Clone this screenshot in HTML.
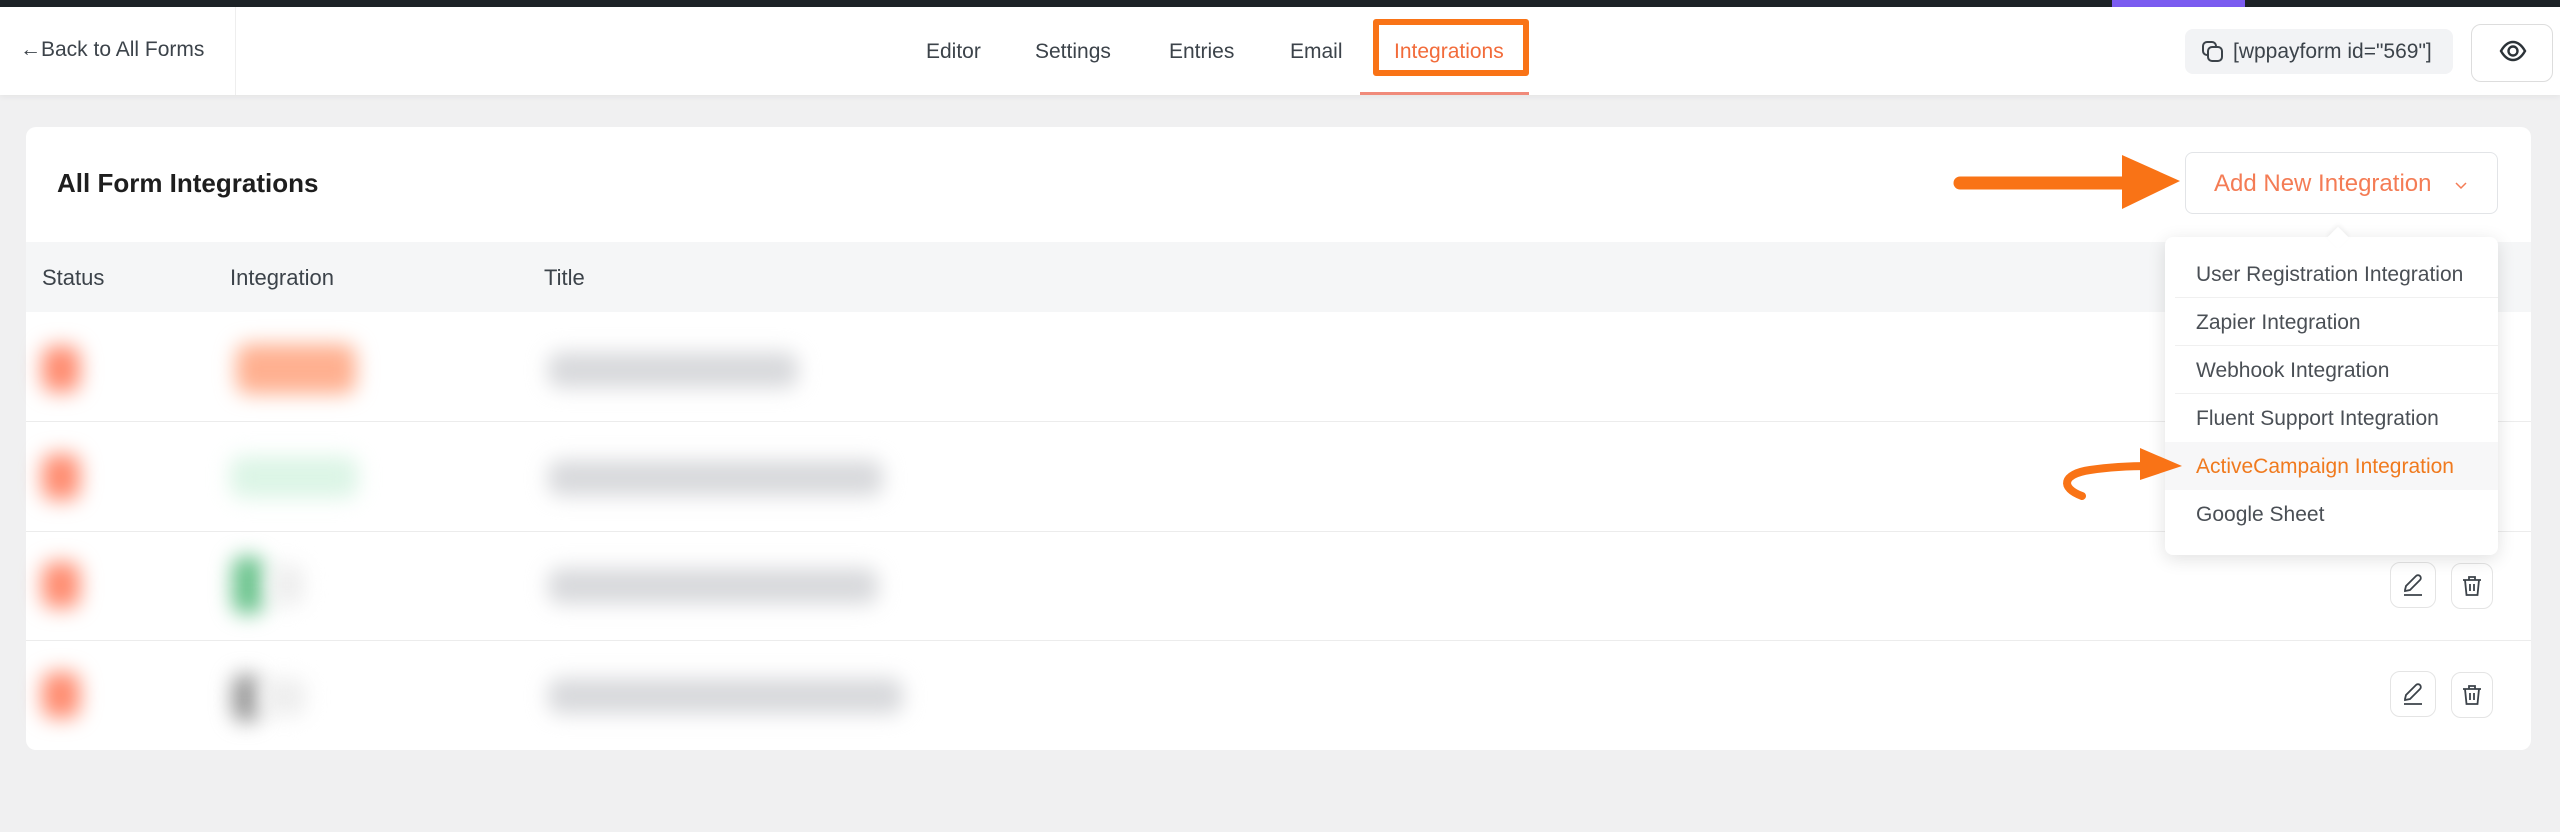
<!DOCTYPE html>
<html><head><meta charset="utf-8"><style>
*{box-sizing:border-box;margin:0;padding:0}
body{width:2560px;height:832px;overflow:hidden;background:#f0f0f1;font-family:"Liberation Sans",sans-serif;position:relative;color:#1e1e1e}
.abs{position:absolute}
.topbar{left:0;top:0;width:2560px;height:7px;background:#1d2327}
.purple{left:2112px;top:0;width:133px;height:7px;background:#7b5cf0}
.header{left:0;top:7px;width:2560px;height:88px;background:#fff;box-shadow:0 2px 6px rgba(0,0,0,.05)}
.nav{font-size:21px;color:#3c434a;top:40px}
.card{left:26px;top:127px;width:2505px;height:623px;background:#fff;border-radius:10px}
.th{font-size:22px;color:#3c434a;top:265px}
.sep{left:26px;width:2505px;height:1px;background:#ececec}
.blur{filter:blur(10px);border-radius:12px}
.dd{left:2165px;top:237px;width:333px;height:318px;background:#fff;border-radius:8px;box-shadow:0 4px 18px rgba(0,0,0,.12)}
.it{position:absolute;left:31px;font-size:21px;color:#4a4f55}
.itsep{position:absolute;left:10px;right:0;height:1px;background:#f0f0f0}
.btn{width:46px;height:46px;border:1px solid #e4e4e4;border-radius:10px;background:#fff;display:flex;align-items:center;justify-content:center}
</style></head><body>
<div class="abs topbar"></div><div class="abs purple"></div>
<div class="abs header"></div>
<div class="abs" style="left:20px;top:38px;font-size:21px;color:#3c434a">←Back to All Forms</div>
<div class="abs" style="left:235px;top:7px;width:1px;height:88px;background:#eee"></div>
<div class="abs nav" style="left:926px">Editor</div>
<div class="abs nav" style="left:1035px">Settings</div>
<div class="abs nav" style="left:1169px">Entries</div>
<div class="abs nav" style="left:1290px">Email</div>
<div class="abs nav" style="left:1394px;color:#f26b3a">Integrations</div>
<div class="abs" style="left:1373px;top:19px;width:156px;height:57px;border:6px solid #f97316;border-radius:3px"></div>
<div class="abs" style="left:1360px;top:92px;width:169px;height:3px;background:#f08a7a"></div>
<div class="abs" style="left:2185px;top:29px;width:268px;height:45px;background:#f2f3f5;border-radius:8px"></div>
<svg class="abs" style="left:2200px;top:39px" width="26" height="26" viewBox="0 0 26 26" fill="none" stroke="#3c434a" stroke-width="2"><rect x="8" y="8" width="14" height="14" rx="4"/><path d="M16 8V7a4 4 0 0 0-4-4H7a4 4 0 0 0-4 4v5a4 4 0 0 0 4 4h1"/></svg>
<div class="abs" style="left:2233px;top:40px;font-size:21px;color:#3c434a">[wppayform id="569"]</div>
<div class="abs" style="left:2471px;top:24px;width:82px;height:58px;border:1px solid #ddd;border-radius:10px;background:#fff"></div>
<svg class="abs" style="left:2499px;top:40px" width="28" height="22" viewBox="0 0 28 22" fill="none" stroke="#2c3338" stroke-width="2.4"><path d="M2 11C6 4 10 2 14 2s8 2 12 9c-4 7-8 9-12 9S6 18 2 11z"/><circle cx="14" cy="11" r="4.5"/></svg>

<div class="abs card"></div>
<div class="abs" style="left:57px;top:168px;font-size:26px;font-weight:bold;color:#1e1e1e">All Form Integrations</div>
<div class="abs" style="left:26px;top:242px;width:2505px;height:70px;background:#f5f6f7"></div>
<div class="abs th" style="left:42px">Status</div>
<div class="abs th" style="left:230px">Integration</div>
<div class="abs th" style="left:544px">Title</div>
<div class="abs sep" style="top:421px"></div>
<div class="abs sep" style="top:531px"></div>
<div class="abs sep" style="top:640px"></div>

<div class="abs blur" style="left:42px;top:346px;width:38px;height:46px;background:#ff8c70"></div>
<div class="abs blur" style="left:42px;top:454px;width:38px;height:46px;background:#ff8c70"></div>
<div class="abs blur" style="left:42px;top:562px;width:38px;height:46px;background:#ff8c70"></div>
<div class="abs blur" style="left:42px;top:672px;width:38px;height:46px;background:#ff8c70"></div>
<div class="abs blur" style="left:236px;top:344px;width:120px;height:50px;background:#ffb090"></div>
<div class="abs blur" style="left:230px;top:456px;width:128px;height:42px;background:#dcf5e6"></div>
<div class="abs blur" style="left:232px;top:556px;width:32px;height:58px;background:#6cc48e"></div>
<div class="abs blur" style="left:270px;top:564px;width:34px;height:42px;background:#eee"></div>
<div class="abs blur" style="left:232px;top:674px;width:28px;height:48px;background:#9a9a9a"></div>
<div class="abs blur" style="left:262px;top:678px;width:44px;height:38px;background:#eee"></div>
<div class="abs blur" style="left:548px;top:352px;width:250px;height:36px;background:#d8d9dc"></div>
<div class="abs blur" style="left:548px;top:460px;width:335px;height:36px;background:#d8d9dc"></div>
<div class="abs blur" style="left:548px;top:568px;width:330px;height:36px;background:#d8d9dc"></div>
<div class="abs blur" style="left:548px;top:678px;width:355px;height:36px;background:#d8d9dc"></div>

<div class="abs btn" style="left:2390px;top:562px"><svg width="26" height="26" viewBox="0 0 26 26" fill="none" stroke="#3c434a" stroke-width="1.8"><path d="M5 18l1-4L16 4a2.5 2.5 0 0 1 4 4L10 18l-5 1z"/><path d="M4 23h18"/></svg></div>
<div class="abs btn" style="left:2451px;top:563px;width:42px"><svg width="22" height="24" viewBox="0 0 22 24" fill="none" stroke="#3c434a" stroke-width="1.8"><path d="M2 6h18M8 6V3h6v3M4 6l1.5 15h11L18 6M9 10v7M13 10v7"/></svg></div>
<div class="abs btn" style="left:2390px;top:671px"><svg width="26" height="26" viewBox="0 0 26 26" fill="none" stroke="#3c434a" stroke-width="1.8"><path d="M5 18l1-4L16 4a2.5 2.5 0 0 1 4 4L10 18l-5 1z"/><path d="M4 23h18"/></svg></div>
<div class="abs btn" style="left:2451px;top:672px;width:42px"><svg width="22" height="24" viewBox="0 0 22 24" fill="none" stroke="#3c434a" stroke-width="1.8"><path d="M2 6h18M8 6V3h6v3M4 6l1.5 15h11L18 6M9 10v7M13 10v7"/></svg></div>

<div class="abs" style="left:2185px;top:152px;width:313px;height:62px;border:1px solid #e2e4e7;border-radius:8px;background:#fff"></div>
<div class="abs" style="left:2214px;top:170px;font-size:24px;color:#f47c55">Add New Integration</div>
<svg class="abs" style="left:2454px;top:180px" width="14" height="10" viewBox="0 0 14 10" fill="none" stroke="#f47c55" stroke-width="1.5"><path d="M2 3l5 5 5-5"/></svg>
<svg class="abs" style="left:1950px;top:145px" width="240" height="80" viewBox="0 0 240 80"><path d="M10 38H180" stroke="#f97316" stroke-width="13" stroke-linecap="round"/><path d="M172 10L230 36 172 64z" fill="#f97316"/></svg>

<div class="abs dd">
<div class="it" style="top:26px">User Registration Integration</div>
<div class="itsep" style="top:60px"></div>
<div class="it" style="top:74px">Zapier Integration</div>
<div class="itsep" style="top:108px"></div>
<div class="it" style="top:122px">Webhook Integration</div>
<div class="itsep" style="top:156px"></div>
<div class="it" style="top:170px">Fluent Support Integration</div>
<div style="position:absolute;left:0;right:0;top:205px;height:48px;background:#f7f7f8"></div>
<div class="it" style="top:218px;color:#f07a1e">ActiveCampaign Integration</div>
<div class="it" style="top:266px">Google Sheet</div>
</div>
<div class="abs" style="left:2330px;top:230px;width:16px;height:16px;background:#fff;transform:rotate(45deg);box-shadow:-2px -2px 4px rgba(0,0,0,.05)"></div>
<svg class="abs" style="left:2060px;top:440px" width="130" height="70" viewBox="0 0 130 70"><path d="M22 56C0 48 2 34 30 30c20-3 40-4 60-4" fill="none" stroke="#f97316" stroke-width="8" stroke-linecap="round"/><path d="M80 8L122 26 80 40z" fill="#f97316"/></svg>
</body></html>
